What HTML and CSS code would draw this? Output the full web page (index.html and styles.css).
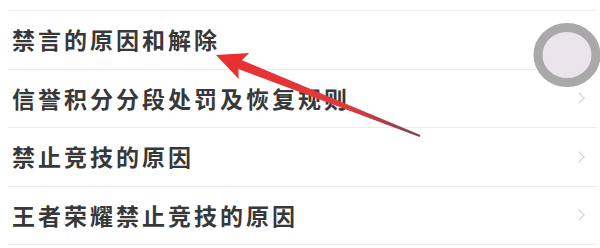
FILE: index.html
```
<!DOCTYPE html>
<html lang="zh">
<head>
<meta charset="utf-8">
<link rel="stylesheet" href="styles.css">
</head>
<body>
<div class="page">
  <ul class="menu">
    <li class="item"><span class="label">禁言的原因和解除</span><span class="chev"></span></li>
    <li class="item"><span class="label">信誉积分分段处罚及恢复规则</span><span class="chev"></span></li>
    <li class="item"><span class="label">禁止竞技的原因</span><span class="chev"></span></li>
    <li class="item"><span class="label">王者荣耀禁止竞技的原因</span><span class="chev"></span></li>
  </ul>
  <svg class="overlay" width="600" height="248" viewBox="0 0 600 248">
    <defs>
      <linearGradient id="shaft" gradientUnits="userSpaceOnUse" x1="216" y1="55" x2="420" y2="136">
        <stop offset="0" stop-color="#ea2f2f"/>
        <stop offset="0.65" stop-color="#e03a3c"/>
        <stop offset="1" stop-color="#7a4450"/>
      </linearGradient>
    </defs>
    <ellipse cx="567" cy="55" rx="29" ry="27.5" fill="#e9e5ea" stroke="#a9a9a9" stroke-width="9"/>
    <polygon fill="url(#shaft)" points="216,55 249.2,53.1 242,60.2 420.4,135.1 419.6,136.9 238.4,69 238.7,79.1"/>
  </svg>
</div>
</body>
</html>
```
FILE: styles.css
```
html, body {
  margin: 0;
  padding: 0;
  background: #ffffff;
}
.page {
  position: relative;
  width: 600px;
  height: 248px;
  overflow: hidden;
  background: #ffffff;
}
.menu {
  list-style: none;
  margin: 10px 3px 0 8px;
  padding: 0;
  border-top: 1px solid #efefef;
}
.item {
  height: 57.5px;
  box-sizing: content-box;
  border-bottom: 1px solid #ececec;
  display: flex;
  align-items: center;
  justify-content: space-between;
  padding: 0 12px 0 4px;
}
.label {
  font-family: "Noto Sans CJK SC", "Noto Sans", sans-serif;
  font-size: 23px;
  font-weight: 600;
  letter-spacing: 3px;
  color: #383838;
  line-height: 1;
}
.chev {
  width: 7px;
  height: 7px;
  border-top: 1.5px solid #cdcdcd;
  border-right: 1.5px solid #cdcdcd;
  transform: rotate(45deg);
  margin-right: 2px;
}
.overlay {
  position: absolute;
  left: 0;
  top: 0;
  pointer-events: none;
}
```
